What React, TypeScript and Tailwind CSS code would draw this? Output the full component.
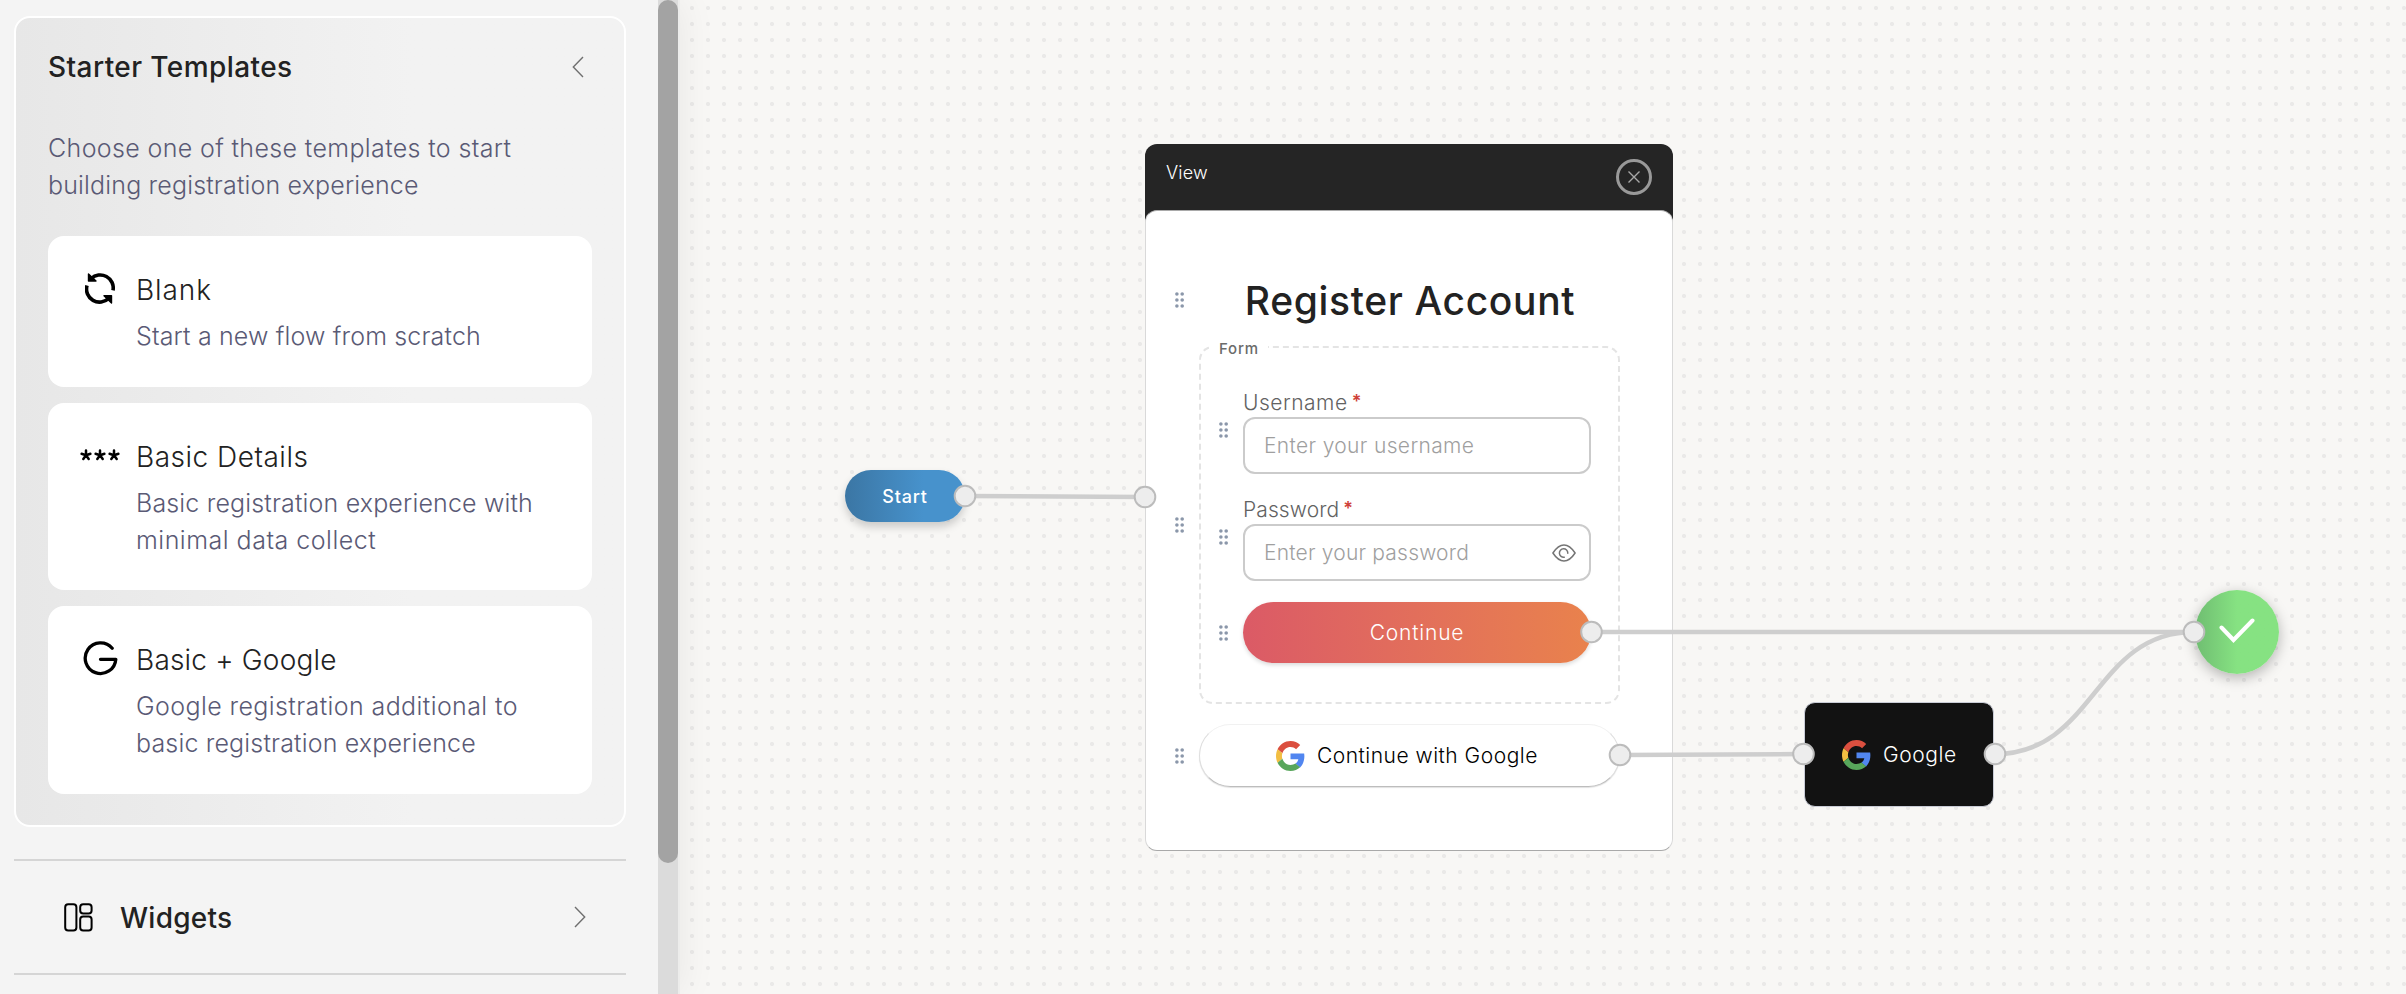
import type { ReactNode } from "react";

function ChevronIcon({ flip = false }: { flip?: boolean }) {
  return (
    <svg width="12" height="22" viewBox="0 0 12 22" fill="none" className={flip ? "rotate-180" : "-mt-0.5"}>
      <path d="M11 1 1.3 11 11 21" stroke="#6f6f6f" strokeWidth="1.4" />
    </svg>
  );
}

function BlankIcon() {
  return (
    <svg width="30" height="31" viewBox="0 0 30 31" fill="none">
      <path d="M6.2 5.6A13 13 0 0 1 28 17.4" stroke="#000" strokeWidth="3.6" />
      <path d="M23.8 25.2A13 13 0 0 1 2 12.6" stroke="#000" strokeWidth="3.6" />
      <path d="M3.5 1v7H11z" fill="#000" stroke="#000" strokeWidth="1.4" strokeLinejoin="round" />
      <path d="M26.5 30v-7.3H19z" fill="#000" stroke="#000" strokeWidth="1.4" strokeLinejoin="round" />
    </svg>
  );
}

function StarsIcon() {
  return (
    <svg width="40" height="12" viewBox="0 0 40 12" fill="none" stroke="#000" strokeWidth="2.5" strokeLinecap="round">
      {[6, 20, 34].map((x) => (
        <path
          key={x}
          d={`M${x} 6.2V1.6M${x} 6.2l4.4-1.4M${x} 6.2l2.7 3.8M${x} 6.2l-2.7 3.8M${x} 6.2l-4.4-1.4`}
        />
      ))}
    </svg>
  );
}

function OutlineGIcon() {
  return (
    <svg width="35" height="35" viewBox="0 0 35 35" fill="none">
      <path
        d="M29.2 7.3A15.3 15.3 0 1 0 32.8 18.3H17.5"
        stroke="#000"
        strokeWidth="3.3"
        strokeLinecap="round"
        strokeLinejoin="round"
      />
    </svg>
  );
}

function GoogleLogo() {
  return (
    <svg width="29" height="30" viewBox="0 0 48 48" preserveAspectRatio="none">
      <path fill="#DB4F3F" d="M24 9.5c3.54 0 6.71 1.22 9.21 3.6l6.85-6.85C35.9 2.38 30.47 0 24 0 14.62 0 6.51 5.38 2.56 13.22l7.98 6.19C12.43 13.72 17.74 9.5 24 9.5z" />
      <path fill="#5186F0" d="M46.98 24.55c0-1.57-.15-3.09-.38-4.55H24v9.02h12.94c-.58 2.96-2.26 5.48-4.78 7.18l7.73 6c4.51-4.18 7.09-10.36 7.09-17.65z" />
      <path fill="#F2BE42" d="M10.53 28.59c-.48-1.45-.76-2.99-.76-4.59s.27-3.14.76-4.59l-7.98-6.19C.92 16.46 0 20.12 0 24c0 3.88.92 7.54 2.56 10.78l7.97-6.19z" />
      <path fill="#58A65B" d="M24 48c6.48 0 11.93-2.13 15.89-5.81l-7.73-6c-2.15 1.45-4.92 2.3-8.16 2.3-6.26 0-11.57-4.22-13.47-9.91l-7.98 6.19C6.51 42.62 14.62 48 24 48z" />
    </svg>
  );
}

function WidgetsIcon() {
  return (
    <svg width="29" height="29" viewBox="0 0 29 29" fill="none" stroke="#000" strokeWidth="2">
      <rect x="1.2" y="1.2" width="11.2" height="26.4" rx="3" />
      <rect x="16.2" y="1.2" width="11.4" height="9.2" rx="3" />
      <rect x="16.2" y="13.6" width="11.4" height="14" rx="3" />
    </svg>
  );
}

function DragHandle() {
  return (
    <svg width="9" height="16" viewBox="0 0 9 16" fill="#8b97aa" className="shrink-0">
      {[2, 8, 14].map((y) => (
        <g key={y}>
          <circle cx="1.9" cy={y} r="1.8" />
          <circle cx="7.2" cy={y} r="1.8" />
        </g>
      ))}
    </svg>
  );
}

function EyeIcon() {
  return (
    <svg width="24" height="18" viewBox="0 0 24 18" fill="none" stroke="#757575" strokeWidth="1.5" strokeLinecap="round">
      <path d="M.9 9C3.8 4.6 7.4 1 12 1s8.200 3.600 11.100 8C20.200 13.400 16.600 17 12 17S3.800 13.400.9 9z" strokeLinejoin="round" />
      <path d="M12.300 13.200A4.200 4.200 0 1 1 15.800 9.200" />
    </svg>
  );
}

type TemplateCardProps = { icon: ReactNode; title: string; spacing: string; children: ReactNode };

function TemplateCard({ icon, title, spacing, children }: TemplateCardProps) {
  return (
    <div className="flex rounded-2xl bg-white pt-[37px] pb-[31.5px]">
      <div className="flex h-[30px] w-[104px] shrink-0 items-center justify-center">{icon}</div>
      <div className="-ml-4">
        <div className={`text-[28px] leading-[34px] font-[350] text-[#222] ${spacing}`}>{title}</div>
        <div className="mt-[11px] text-[25px] leading-[37px] font-[350] whitespace-nowrap text-[#5a5a75]">{children}</div>
      </div>
    </div>
  );
}

function Sidebar() {
  return (
    <aside className="relative z-10 flex h-full w-[680px] shrink-0 bg-[#f4f4f4] shadow-[0_0_36px_rgba(0,0,0,0.07)]">
      <div className="flex w-[658px] flex-col pt-4 pr-8 pl-[14px]">
        <section className="h-[811px] shrink-0 rounded-2xl border-2 border-white bg-linear-to-r from-[#e7e7e7] to-[#f2f2f2] to-65% px-8">
          <div className="mt-8 flex items-center justify-between pr-2">
            <h2 className="text-[28px] leading-[35px] font-medium tracking-[0.42px] text-[#222]">Starter Templates</h2>
            <ChevronIcon />
          </div>
          <p className="mt-[45px] text-[25px] leading-[37px] font-[350] whitespace-nowrap text-[#5a5a75]">
            <span className="tracking-[0.36px]">Choose one of these templates to start</span>
            <br />
            <span className="tracking-[0.16px]">building registration experience</span>
          </p>
          <div className="mt-8 flex flex-col gap-4">
            <TemplateCard icon={<BlankIcon />} title="Blank" spacing="tracking-[0.9px]">
              <span className="tracking-[0.15px]">Start a new flow from scratch</span>
            </TemplateCard>
            <TemplateCard icon={<StarsIcon />} title="Basic Details" spacing="tracking-[0.5px]">
              <span className="tracking-[0.16px]">Basic registration experience with</span>
              <br />
              <span className="tracking-[0.5px]">minimal data collect</span>
            </TemplateCard>
            <TemplateCard icon={<OutlineGIcon />} title="Basic + Google" spacing="tracking-[0.2px]">
              <span className="tracking-[0.4px]">Google registration additional to</span>
              <br />
              <span className="tracking-[0.16px]">basic registration experience</span>
            </TemplateCard>
          </div>
        </section>
        <div className="mt-8 flex h-[116px] shrink-0 items-center border-y-2 border-[#d5d5d5] pr-10 pl-[50px]">
          <WidgetsIcon />
          <h2 className="ml-[27px] flex-1 pt-0.5 text-[28px] leading-[34px] font-medium tracking-[0.25px] text-[#222]">
            Widgets
          </h2>
          <ChevronIcon flip />
        </div>
      </div>
      <div className="h-full w-5 bg-[#dbdbdb]">
        <div className="h-[863px] w-full rounded-full bg-[#a3a3a3]" />
      </div>
      <div className="h-full w-[2px] bg-[#ececeb]" />
    </aside>
  );
}

function Field({ label, spacing, children }: { label: string; spacing: string; children: ReactNode }) {
  return (
    <div className="flex items-center gap-[15px]">
      <div className="-mt-1">
        <DragHandle />
      </div>
      <div className="w-[348px]">
        <div className="flex h-7 text-[21px] leading-7 font-[350] text-[#626262]">
          <span className={spacing}>{label}</span>
          <span className="ml-1 text-[18px] leading-[25px] font-semibold text-[#cf4037]">*</span>
        </div>
        <div className="flex h-[57px] items-center justify-between rounded-xl border-2 border-[#cbcbcb] bg-white pt-px pr-[13px] pl-[19px] text-[21px] font-[350] text-[#9f9f9f]">
          {children}
        </div>
      </div>
    </div>
  );
}

function ViewNode() {
  return (
    <div className="absolute top-[144px] left-[465px] w-[528px]">
      <div className="flex h-20 justify-between rounded-t-xl bg-[#252525] pt-[15px] pr-[21px] pl-[21px]">
        <span className="mt-[2px] text-[18px] leading-6 font-[350] tracking-[0.2px] text-white">View</span>
        <span className="flex h-9 w-9 items-center justify-center rounded-full border-3 border-[#999]">
          <svg width="12" height="12" viewBox="0 0 12 12" stroke="#a8a8a8" strokeWidth="1.4">
            <path d="M.5.5l11 11M11.500.5l-11 11" />
          </svg>
        </span>
      </div>
      <div className="-mt-[14px] flex h-[641px] flex-col rounded-xl border border-x-[#d9d9d9] border-t-[#a9a9a9] border-b-[#a9a9a9] bg-white pt-[66px] pl-[29px]">
        <div className="flex items-center gap-[15px]">
          <DragHandle />
          <h1 className="h-[46px] w-[422px] pt-px text-center text-[39px] leading-[46px] font-medium tracking-[0.65px] text-[#222]">
            Register Account
          </h1>
        </div>
        <div className="mt-[23px] flex items-center gap-[15px]">
          <DragHandle />
          <div className="relative flex h-[358px] w-[421px] flex-col rounded-[14px] border-2 border-dashed border-[#e4e4e4] pt-[41px] pl-[18px]">
            <span className="absolute -top-[9px] left-2 w-[59px] bg-white pl-[10px] text-[15px] leading-5 font-medium tracking-[0.8px] text-[#6b6b6b]">
              Form
            </span>
            <Field label="Username" spacing="tracking-[0.5px]">
              <span className="tracking-[0.35px]">Enter your username</span>
            </Field>
            <div className="mt-[22px]">
              <Field label="Password" spacing="tracking-[0.1px]">
                <span className="tracking-[0.2px]">Enter your password</span>
                <EyeIcon />
              </Field>
            </div>
            <div className="mt-[21px] flex items-center gap-[15px]">
              <DragHandle />
              <button className="h-[61px] w-[348px] rounded-full bg-linear-to-r from-[#db5a66] to-[#e9824c] text-[21px] font-[350] tracking-[0.8px] text-white shadow-[0_2px_4px_rgba(0,0,0,0.15)]">
                Continue
              </button>
            </div>
          </div>
        </div>
        <div className="mt-5 flex items-center gap-[15px]">
          <DragHandle />
          <button className="flex h-[63px] w-[421px] items-center rounded-full border border-x-[#dedede] border-t-[#f1f1f1] border-b-[#bdbdbd] bg-white pl-[76px] text-[21px] font-[350] tracking-[0.5px] text-black shadow-[0_1px_1px_rgba(0,0,0,0.12)]">
            <GoogleLogo />
            <span className="ml-3">Continue with Google</span>
          </button>
        </div>
      </div>
    </div>
  );
}

const ports: [number, number][] = [
  [965, 496],
  [1145, 497],
  [1591.5, 632],
  [1620, 755],
  [1803.5, 754],
  [1995, 754],
  [2194, 632],
];

function Canvas() {
  return (
    <main className="relative h-full flex-1 overflow-hidden bg-[#f8f7f5] bg-[radial-gradient(circle,#eae9e8_1.8px,transparent_2.4px)] bg-[size:16px_16px] bg-[position:4px_0]">
      <div className="absolute top-[470px] left-[165px] flex h-[52px] w-[120px] items-center justify-center rounded-full bg-linear-to-r from-[#3b76a4] to-[#4792cc] to-65% shadow-[0_5px_8px_rgba(0,0,0,0.18)]">
        <span className="text-[18px] font-medium tracking-[0.8px] text-white">Start</span>
      </div>
      <ViewNode />
      <div className="absolute top-[702px] left-[1124px] flex h-[105px] w-[190px] items-center rounded-[11px] border border-[#c9ccd6] bg-[#121212] pl-[37px]">
        <GoogleLogo />
        <span className="ml-3 text-[21px] font-[350] tracking-[0.6px] text-white">Google</span>
      </div>
      <div className="absolute top-[590px] left-[1515px] flex h-[84px] w-[84px] items-center justify-center rounded-full bg-linear-to-r from-[#6fbd71] to-[#86e282] to-50% shadow-[0_4px_14px_rgba(0,0,0,0.28)]">
        <svg width="36" height="25" viewBox="0 0 36 25" fill="none" className="-mt-1">
          <path d="M2.500 9.500 14.500 22 33.500 2.500" stroke="#fff" strokeWidth="4" strokeLinecap="round" />
        </svg>
      </div>
      <svg
        className="pointer-events-none absolute inset-0"
        width="1726"
        height="994"
        viewBox="680 0 1726 994"
        fill="none"
      >
        <g stroke="#cecece" strokeWidth="4.5">
          <path d="M965 496 1145 497" />
          <path d="M1592 632H2194" />
          <path d="M1620 755 1803 754" />
          <path d="M1995 754C2095 754 2094 632 2194 632" />
        </g>
        <g fill="#ededed" stroke="#bcbcbc" strokeWidth="2">
          {ports.map(([x, y]) => (
            <circle key={`${x}-${y}`} cx={x} cy={y} r="10.3" />
          ))}
        </g>
      </svg>
    </main>
  );
}

export default function App() {
  return (
    <div className="flex h-[994px] w-[2406px] overflow-hidden font-['Inter',sans-serif]">
      <Sidebar />
      <Canvas />
    </div>
  );
}
